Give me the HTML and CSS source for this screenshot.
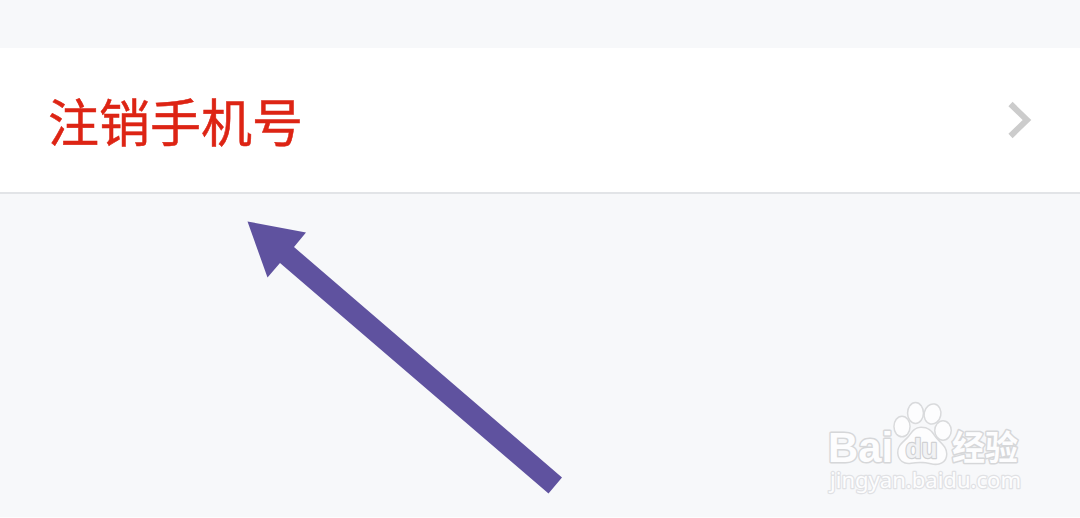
FILE: index.html
```html
<!DOCTYPE html>
<html lang="zh-CN">
<head>
  <meta charset="UTF-8" />
  <title>注销手机号</title>
  <meta name="viewport" content="width=device-width, initial-scale=1.0" />
  <link rel="stylesheet" href="styles.css">
</head>
<body>

  <main class="page">
    <a class="row">
      <span class="row-label">注销手机号</span>
      <svg class="chevron" viewBox="0 0 24 38">
        <path d="M2.5 3 L19 19 L2.5 35"/>
      </svg>
    </a>

    <!-- Pointer laid over the page -->
    <svg class="arrow" viewBox="0 0 316 274">
      <path d="M0.5 1.5 L59 12.5 L47 27 L315 257.5 L301.5 273.5 L33 43 L20.5 57.5 Z"/>
    </svg>

    <svg class="watermark" viewBox="0 0 200 100">
      <text class="brand" x="8" y="67" font-size="43" textLength="65" lengthAdjust="spacingAndGlyphs">Bai</text>
      <g class="paw">
        <ellipse cx="82" cy="31.5" rx="7.3" ry="9.5"/>
        <ellipse cx="95.5" cy="18" rx="7.2" ry="9.7"/>
        <ellipse cx="112.5" cy="19" rx="7.6" ry="9.4" transform="rotate(12 112.5 19)"/>
        <ellipse cx="123" cy="35.5" rx="7.5" ry="9"/>
        <path d="M101 33 C95 33 92 38 89 42 C85 47 78 50 78.5 58 C79 65 84 68.5 91 67.5 C97 66.5 105 66.5 111 68 C119 70 126 67 126 59 C126 51 119 48 114 41 C111 36 108 33 101 33 Z"/>
      </g>
      <text class="du" x="85.5" y="63" font-size="27" textLength="32" lengthAdjust="spacingAndGlyphs">du</text>
      <text class="brand cn" x="132" y="65" font-size="34" textLength="66" lengthAdjust="spacingAndGlyphs">经验</text>
      <text class="site" x="10" y="93" font-size="22" textLength="191" lengthAdjust="spacingAndGlyphs">jingyan.baidu.com</text>
    </svg>
  </main>

</body>
</html>
```
FILE: styles.css
```css
html, body {
  margin: 0;
  padding: 0;
  height: 100%;
  overflow: hidden;
  font-family: "Noto Sans CJK SC", sans-serif;
  background: #f7f8fa;
}

.page {
  position: relative;
  box-sizing: border-box;
  height: 518px;
  padding-top: 48px;
  border-bottom: 1px solid #fcfdfd;
}

.row {
  display: flex;
  align-items: center;
  justify-content: space-between;
  box-sizing: border-box;
  height: 146px;
  padding: 0 48px;
  background: #fff;
  border-bottom: 2px solid #e2e4e7;
}

.row-label {
  font-size: 51px;
  line-height: 72px;
  color: #dd2414;
  -webkit-text-stroke: 0.5px #dd2414;
}

.chevron {
  width: 24px;
  height: 38px;
}

.chevron path {
  fill: none;
  stroke: #ccc;
  stroke-width: 6;
}

.arrow {
  position: absolute;
  left: 247px;
  top: 220px;
  width: 316px;
  height: 274px;
  fill: #5f529f;
}

.watermark {
  position: absolute;
  left: 820px;
  top: 395px;
  width: 200px;
  height: 100px;
  overflow: visible;
  fill: #fdfdfe;
  stroke: #d6d7d9;
  stroke-width: 3;
  stroke-linejoin: round;
  paint-order: stroke;
}

.brand,
.du {
  font-family: "Liberation Sans", sans-serif;
  font-weight: bold;
}

.paw {
  stroke: #d9dadc;
}

.cn {
  font-family: "Noto Sans CJK SC", sans-serif;
}

.du {
  fill: #f1f2f4;
  stroke: #d0d1d3;
  stroke-width: 2.4;
}

.site {
  font-family: "Noto Sans", sans-serif;
  stroke: #e0e1e4;
  stroke-width: 2.4;
}
```
